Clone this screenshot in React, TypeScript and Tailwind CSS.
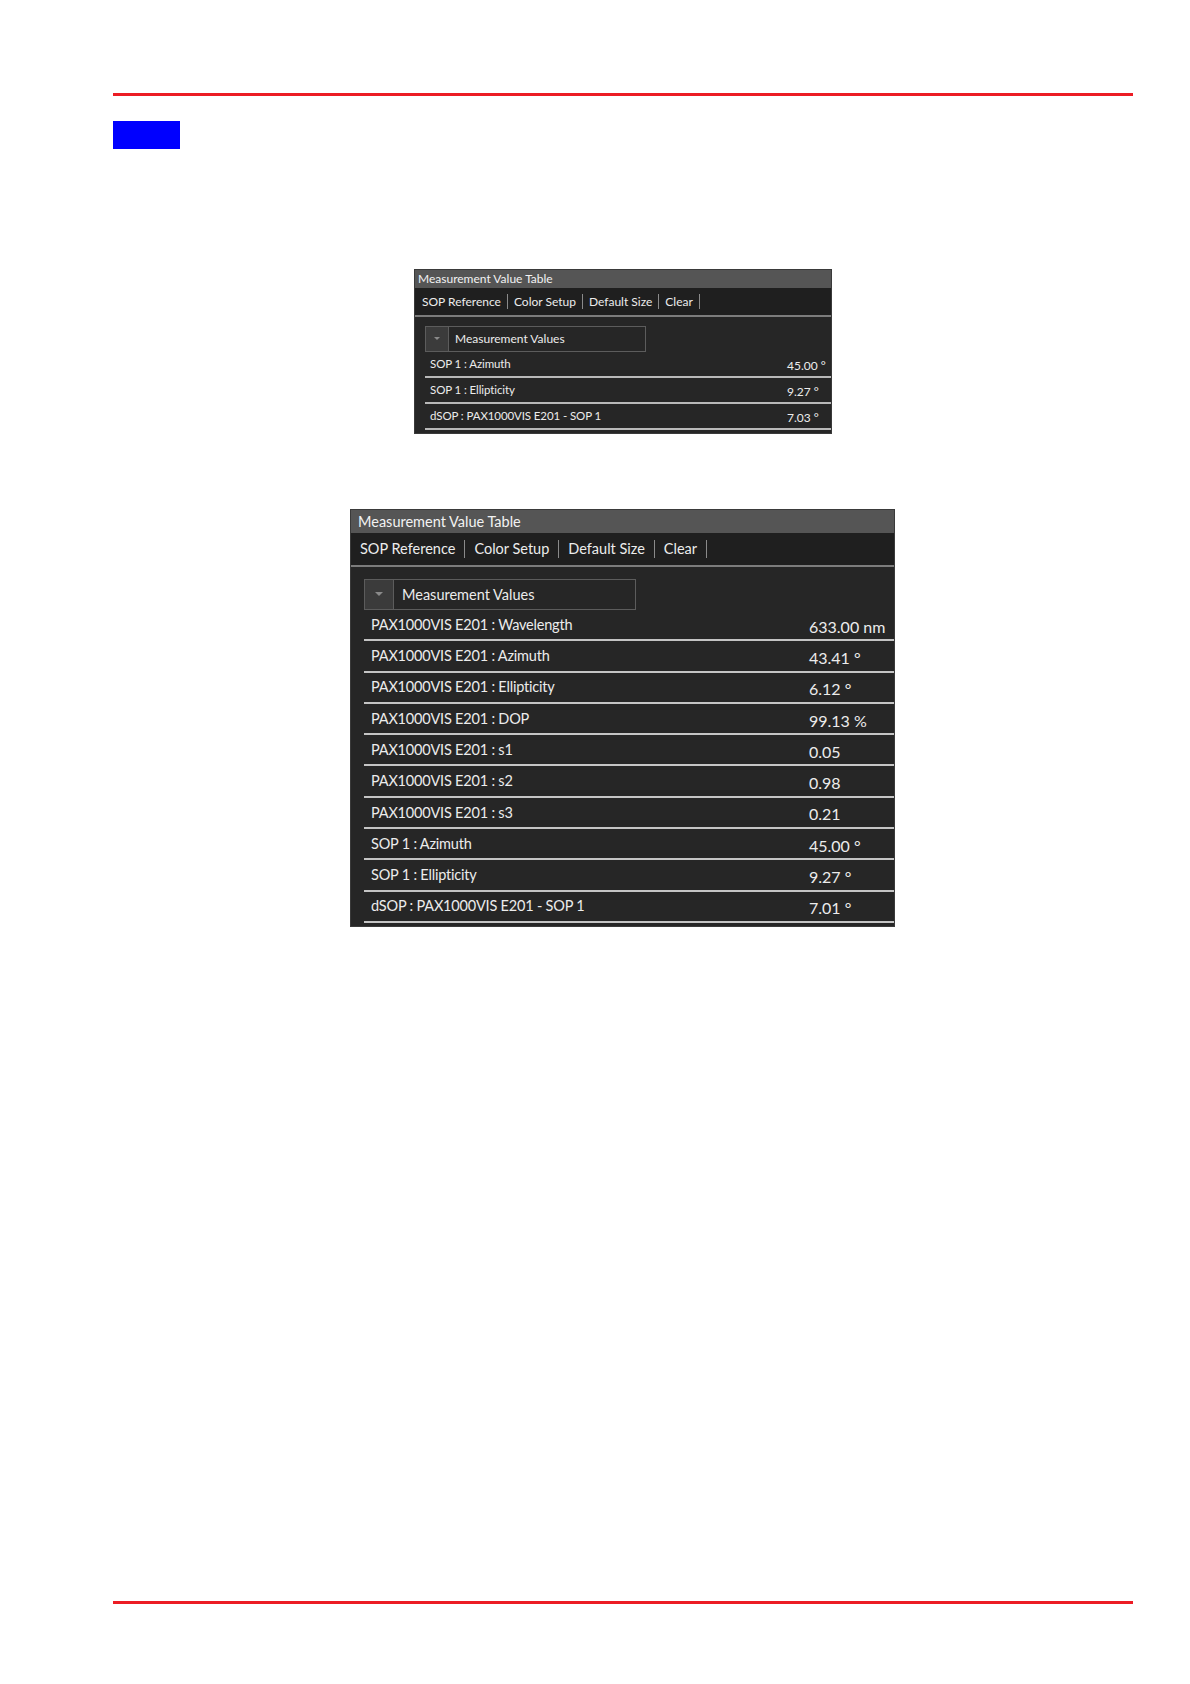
import React from "react";

type Row = { label: string; value: string };

const smallRows: Row[] = [
  { label: "SOP 1 : Azimuth", value: "45.00 °" },
  { label: "SOP 1 : Ellipticity", value: "9.27 °" },
  { label: "dSOP : PAX1000VIS E201 - SOP 1", value: "7.03 °" },
];

const bigRows: Row[] = [
  { label: "PAX1000VIS E201 : Wavelength", value: "633.00 nm" },
  { label: "PAX1000VIS E201 : Azimuth", value: "43.41 °" },
  { label: "PAX1000VIS E201 : Ellipticity", value: "6.12 °" },
  { label: "PAX1000VIS E201 : DOP", value: "99.13 %" },
  { label: "PAX1000VIS E201 : s1", value: "0.05" },
  { label: "PAX1000VIS E201 : s2", value: "0.98" },
  { label: "PAX1000VIS E201 : s3", value: "0.21" },
  { label: "SOP 1 : Azimuth", value: "45.00 °" },
  { label: "SOP 1 : Ellipticity", value: "9.27 °" },
  { label: "dSOP : PAX1000VIS E201 - SOP 1", value: "7.01 °" },
];

const tools = ["SOP Reference", "Color Setup", "Default Size", "Clear"];

const font = { fontFamily: "Lato, 'Open Sans', sans-serif" };

function SmallTable() {
  return (
    <div
      className="w-[418px] bg-[#262626] border border-[#3a3a3a] text-[#ececec] text-[12px]"
      style={font}
    >
      {/* title */}
      <div className="h-[18px] bg-[#555555] flex items-center pl-[3px] text-[#f2f2f2]">
        Measurement Value Table
      </div>
      {/* toolbar */}
      <div className="h-[29px] bg-[#1f1f1f] flex items-center pl-[7px] border-b-2 border-[#7c7c7c]">
        {tools.map((t) => (
          <div key={t} className="flex items-center">
            <span>{t}</span>
            <span className="mx-[6px] w-px h-[15px] bg-[#8a8a8a]" />
          </div>
        ))}
      </div>
      {/* content */}
      <div className="pl-[10px] pt-[9px] pb-[3px]">
        <div className="w-[221px] h-[26px] border border-[#5c5c5c] flex items-center">
          <div className="w-[23px] h-full bg-[#3b3b3b] border-r border-[#5c5c5c] flex items-center justify-center">
            <svg width="6" height="4" viewBox="0 0 6 4">
              <path d="M0 0 L6 0 L3 3 Z" fill="#8a8a8a" />
            </svg>
          </div>
          <span className="ml-[6px]">Measurement Values</span>
        </div>
        {smallRows.map((r) => (
          <div
            key={r.label}
            className="h-[26px] flex items-center border-b-2 border-[#b8b8b8] pl-[5px]"
          >
            <span className="flex-1 text-[11.5px] tracking-[-0.1px]">{r.label}</span>
            <span className="w-[44px] pt-[3px]">{r.value}</span>
          </div>
        ))}
      </div>
    </div>
  );
}

function BigTable() {
  return (
    <div
      className="w-[545px] bg-[#262626] border border-[#3a3a3a] text-[#ececec] text-[14.5px]"
      style={font}
    >
      {/* title */}
      <div className="h-[23px] bg-[#555555] flex items-center pl-[7px] text-[#f2f2f2]">
        Measurement Value Table
      </div>
      {/* toolbar */}
      <div className="h-[34px] bg-[#1f1f1f] flex items-center pl-[9px] border-b-2 border-[#7c7c7c]">
        {tools.map((t) => (
          <div key={t} className="flex items-center">
            <span>{t}</span>
            <span className="mx-[9px] w-px h-[18px] bg-[#8a8a8a]" />
          </div>
        ))}
      </div>
      {/* content */}
      <div className="pl-[13px] pt-[12px] pb-[3px]">
        <div className="w-[272px] h-[31px] border border-[#5c5c5c] flex items-center">
          <div className="w-[29px] h-full bg-[#3b3b3b] border-r border-[#5c5c5c] flex items-center justify-center">
            <svg width="8" height="5" viewBox="0 0 8 5">
              <path d="M0 0 L8 0 L4 4 Z" fill="#8a8a8a" />
            </svg>
          </div>
          <span className="ml-[8px]">Measurement Values</span>
        </div>
        {bigRows.map((r) => (
          <div
            key={r.label}
            className="h-[31.3px] flex items-center border-b-2 border-[#c4c4c4] pl-[7px]"
          >
            <span className="flex-1 tracking-[-0.2px]">{r.label}</span>
            <span className="w-[85px] pt-[4px] text-[16px]">{r.value}</span>
          </div>
        ))}
      </div>
    </div>
  );
}

export default function App() {
  return (
    <div className="w-[1190px] h-[1684px] bg-white flex flex-col">
      <div className="mt-[93px] ml-[113px] w-[1020px] h-[3px] bg-[#ec1c24]" />
      <div className="mt-[25px] ml-[113px] w-[67px] h-[28px] bg-[#0000ff]" />

      <div className="mt-[120px] ml-[414px]">
        <SmallTable />
      </div>

      <div className="mt-[75px] ml-[350px]">
        <BigTable />
      </div>

      <div className="flex-1" />
      <div className="mb-[80px] ml-[113px] w-[1020px] h-[3px] bg-[#ec1c24]" />
    </div>
  );
}
